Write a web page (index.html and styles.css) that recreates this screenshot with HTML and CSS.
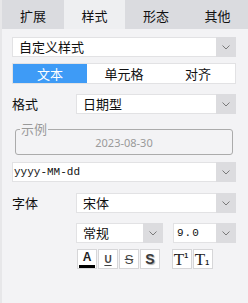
FILE: index.html
```html
<!DOCTYPE html>
<html lang="zh">
<head>
<meta charset="utf-8">
<link rel="stylesheet" href="styles.css">
</head>
<body>
<div class="panel">
  <div class="tabs">
    <div class="tab">扩展</div>
    <div class="tab active">样式</div>
    <div class="tab">形态</div>
    <div class="tab">其他</div>
  </div>
  <div class="content">
    <div class="select s-top">
      <span class="val">自定义样式</span>
      <span class="arrow"><svg width="8" height="5" viewBox="0 0 8 5"><path d="M0.5 0.5 L4 4 L7.5 0.5" fill="none" stroke="#7a7a7a" stroke-width="1"/></svg></span>
    </div>
    <div class="seg">
      <div class="seg-item on">文本</div>
      <div class="seg-item">单元格</div>
      <div class="seg-item">对齐</div>
    </div>
    <div class="row r-format">
      <span class="label">格式</span>
      <div class="select grow">
        <span class="val">日期型</span>
        <span class="arrow"><svg width="8" height="5" viewBox="0 0 8 5"><path d="M0.5 0.5 L4 4 L7.5 0.5" fill="none" stroke="#7a7a7a" stroke-width="1"/></svg></span>
      </div>
    </div>
    <fieldset class="example">
      <legend>示例</legend>
      <div class="date">2023-08-30</div>
    </fieldset>
    <div class="select s-pattern">
      <span class="val mono">yyyy-MM-dd</span>
      <span class="arrow"><svg width="8" height="5" viewBox="0 0 8 5"><path d="M0.5 0.5 L4 4 L7.5 0.5" fill="none" stroke="#7a7a7a" stroke-width="1"/></svg></span>
    </div>
    <div class="row r-font">
      <span class="label">字体</span>
      <div class="select grow">
        <span class="val">宋体</span>
        <span class="arrow"><svg width="8" height="5" viewBox="0 0 8 5"><path d="M0.5 0.5 L4 4 L7.5 0.5" fill="none" stroke="#7a7a7a" stroke-width="1"/></svg></span>
      </div>
    </div>
    <div class="row r-style">
      <div class="select s-weight">
        <span class="val">常规</span>
        <span class="arrow"><svg width="8" height="5" viewBox="0 0 8 5"><path d="M0.5 0.5 L4 4 L7.5 0.5" fill="none" stroke="#7a7a7a" stroke-width="1"/></svg></span>
      </div>
      <div class="select s-size">
        <span class="val mono size-val">9.0</span>
        <span class="arrow"><svg width="8" height="5" viewBox="0 0 8 5"><path d="M0.5 0.5 L4 4 L7.5 0.5" fill="none" stroke="#7a7a7a" stroke-width="1"/></svg></span>
      </div>
    </div>
    <div class="row r-btns">
      <div class="btn-group">
        <div class="btn b-color"><span class="a">A</span><span class="bar"></span></div>
        <div class="btn b-under"><span>U</span></div>
        <div class="btn b-strike"><span>S</span></div>
        <div class="btn b-shadow"><span>S</span></div>
      </div>
      <div class="btn-group g2">
        <div class="btn b-t"><span class="t">T</span><span class="sup">1</span></div>
        <div class="btn b-t"><span class="t">T</span><span class="sub">1</span></div>
      </div>
    </div>
  </div>
</div>
</body>
</html>
```

FILE: styles.css
```css
html, body {
  margin: 0;
  padding: 0;
}
body {
  width: 248px;
  height: 303px;
  background: #f3f3f5;
  font-family: "Noto Sans CJK SC", "Noto Sans", sans-serif;
  font-size: 13px;
  color: #111;
  overflow: hidden;
}
.panel {
  height: 303px;
  box-sizing: border-box;
  border-left: 2px solid #e7e7e9;
}
.tabs {
  display: grid;
  grid-template-columns: 62px 61px 62px 61px;
  height: 27px;
}
.tab {
  background: #dadbdf;
  text-align: center;
  font-size: 13px;
  line-height: 27px;
  padding-top: 2px;
  box-sizing: border-box;
  color: #111;
}
.tab.active {
  background: #eeeff1;
}
.content {
  padding: 0 12px 0 10px;
  display: flex;
  flex-direction: column;
}
.select {
  display: flex;
  height: 20px;
  box-sizing: border-box;
  background: #fff;
  border: 1px solid #e2e2e4;
  border-right: none;
}
.select .val {
  flex: 1;
  padding-left: 6px;
  line-height: 18px;
  white-space: nowrap;
  overflow: hidden;
}
.select .arrow {
  width: 20px;
  background: #dcdcdf;
  display: flex;
  align-items: center;
  justify-content: center;
  margin: -1px 0;
}
.s-top {
  margin-top: 10px;
}
.s-top .val {
  padding-left: 6px;
}
.seg {
  margin-top: 6px;
  height: 21px;
  display: grid;
  grid-template-columns: 1fr 1fr 1fr;
  background: #fff;
  border: 1px solid #e2e2e4;
  box-sizing: border-box;
}
.seg-item {
  text-align: center;
  line-height: 19px;
}
.seg-item.on {
  background: #3e9bf6;
  color: #fff;
}
.row {
  display: flex;
  align-items: center;
}
.label {
  width: 64px;
  line-height: 20px;
}
.grow {
  flex: 1;
}
.r-format {
  margin-top: 10px;
}
.example {
  margin: 8px 3px 0 3px;
  padding: 0 4px 4px 4px;
  border: 1px solid #ababab;
  border-radius: 3px;
  min-width: 0;
}
.example legend {
  padding: 0 1px;
  color: #9a9a9a;
  font-size: 13px;
  line-height: 14px;
}
.date {
  text-align: center;
  color: #9a9a9a;
  font-family: "Noto Sans", sans-serif;
  font-size: 11px;
  line-height: 14px;
}
.s-pattern {
  margin-top: 7px;
}
.mono {
  font-family: "Liberation Mono", "DejaVu Sans Mono", monospace;
  font-size: 11px;
}
.s-pattern .val {
  padding-left: 1px;
}
.r-font {
  margin-top: 11px;
}
.r-style {
  margin-top: 10px;
  padding-left: 64px;
}
.s-weight {
  width: 87px;
}
.s-size {
  width: 63px;
  margin-left: 10px;
}
.size-val {
  letter-spacing: 1px;
}
.s-size .val {
  padding-left: 3px;
}
.r-btns {
  margin-top: 6px;
  padding-left: 65px;
}
.btn-group {
  display: flex;
  gap: 1px;
}
.g2 {
  margin-left: 12px;
}
.btn {
  width: 20px;
  height: 20px;
  box-sizing: border-box;
  background: #fff;
  border: 1px solid #d6d6d8;
  position: relative;
  display: flex;
  align-items: center;
  justify-content: center;
  font-family: "Liberation Sans", Arial, sans-serif;
  font-weight: bold;
}
.b-color {
  flex-direction: column;
  justify-content: flex-start;
}
.b-color .a {
  font-size: 12px;
  line-height: 12px;
  margin-top: 1px;
  color: #222;
}
.b-color .bar {
  width: 16px;
  height: 4px;
  background: #000;
  margin-top: 2px;
}
.b-under span {
  font-size: 10px;
  color: #444;
  text-decoration: underline;
  text-underline-offset: 2px;
}
.b-strike span {
  font-size: 13px;
  font-weight: normal;
  color: #444;
  text-decoration: line-through;
}
.b-shadow span {
  font-size: 14px;
  color: #3a3a3a;
  text-shadow: 1px 1px 1px #aaa;
}
.b-t {
  font-family: "Liberation Serif", "Times New Roman", serif;
  font-weight: normal;
}
.b-t .t {
  font-size: 17px;
  line-height: 17px;
  color: #222;
  margin-left: -2px;
}
.b-t .sup {
  font-family: "Liberation Sans", sans-serif;
  font-weight: bold;
  font-size: 7px;
  align-self: flex-start;
  margin-top: 2px;
  color: #222;
}
.b-t .sub {
  font-family: "Liberation Sans", sans-serif;
  font-weight: bold;
  font-size: 7px;
  align-self: flex-end;
  margin-bottom: 2px;
  color: #222;
}
```
